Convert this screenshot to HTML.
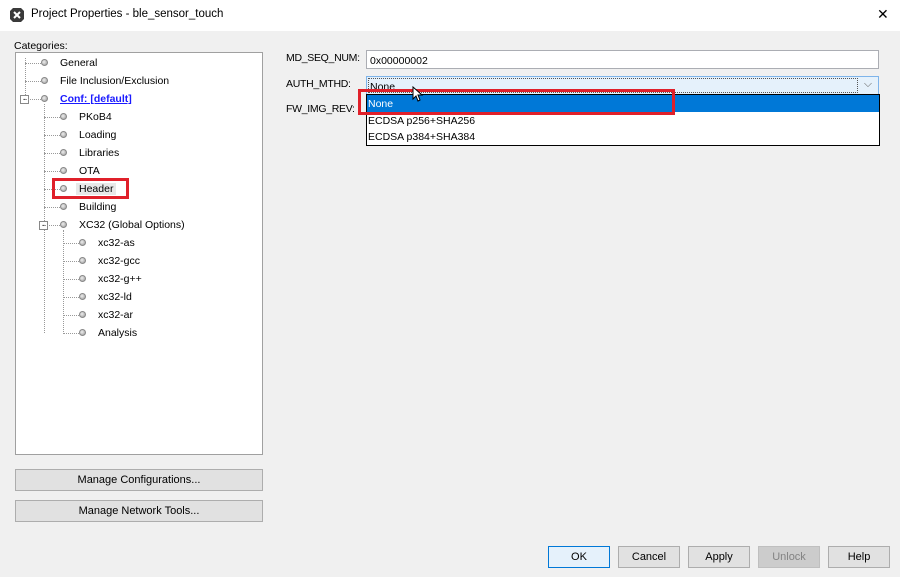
<!DOCTYPE html>
<html><head><style>
*{margin:0;padding:0;box-sizing:border-box}
body{width:900px;height:577px;background:#f0f0f0;font-family:"Liberation Sans",Arial,sans-serif;font-size:10.5px;color:#000;position:relative;overflow:hidden}
.a{position:absolute;white-space:nowrap}
.title{left:0;top:0;width:900px;height:31px;background:#fff}
.tree{left:15px;top:52px;width:248px;height:403px;background:#fff;border:1px solid #a0a0a0}
.dot{position:absolute;width:7px;height:7px;border-radius:50%;background:radial-gradient(circle at 40% 40%,#eee,#999);border:1px solid #888}
.btn{position:absolute;height:22px;background:#e1e1e1;border:1px solid #adadad;text-align:center;line-height:20px;font-size:11px}
.hl{border-left:1px dotted #999;position:absolute;width:0}
.hh{border-top:1px dotted #999;position:absolute;height:0}
</style></head><body>
<div class="a title"></div>
<svg class="a" style="left:9px;top:7px" width="16" height="16" viewBox="0 0 16 16"><path d="M4 1h8l3 3v8l-3 3H4l-3-3V4z" fill="#3a3a3a"/><path d="M5 5l6 6M11 5l-6 6" stroke="#fff" stroke-width="2"/></svg>
<div class="a" style="left:31px;top:8px;font-size:11.5px">Project Properties - ble_sensor_touch</div>
<div class="a" style="left:877px;top:6px;font-size:14px">✕</div>
<div class="a" style="left:14px;top:40px">Categories:</div>
<div class="a tree"></div>
<div class="hl" style="left:25px;top:58px;height:45px"></div>
<div class="hl" style="left:44px;top:104px;height:229px"></div>
<div class="hl" style="left:63px;top:230px;height:104px"></div>
<div class="a" style="left:20px;top:95px;width:9px;height:9px;border:1px solid #888;background:#fff;font-size:9px;line-height:6px;text-align:center">-</div>
<div class="a" style="left:39px;top:221px;width:9px;height:9px;border:1px solid #888;background:#fff;font-size:9px;line-height:6px;text-align:center">-</div>
<div id="t"></div>
<script>
var items=[[0,"General"],[0,"File Inclusion/Exclusion"],[0,"Conf: [default]"],[1,"PKoB4"],[1,"Loading"],[1,"Libraries"],[1,"OTA"],[1,"Header"],[1,"Building"],[1,"XC32 (Global Options)"],[2,"xc32-as"],[2,"xc32-gcc"],[2,"xc32-g++"],[2,"xc32-ld"],[2,"xc32-ar"],[2,"Analysis"]];
var h="";items.forEach(function(it,i){var y=63+18*i,l=it[0];var lx=[25,44,63][l],dx=[41,60,79][l],tx=[60,79,98][l];
h+='<div class="hh" style="left:'+lx+'px;top:'+y+'px;width:'+(dx-lx)+'px"></div>';
h+='<div class="dot" style="left:'+dx+'px;top:'+(y-4)+'px"></div>';
var st=i==2?'color:#1a1aff;font-weight:bold;text-decoration:underline;':'';
if(i==7)st='background:#e8e8e8;padding:0 3px;margin-left:-3px;';
h+='<div class="a" style="left:'+tx+'px;top:'+(y-6)+'px;'+st+'">'+it[1]+'</div>';});
document.getElementById('t').innerHTML=h;
</script>
<div class="a" style="left:52px;top:178px;width:77px;height:21px;border:3px solid #e0202a"></div>
<div class="btn" style="left:15px;top:469px;width:248px">Manage Configurations...</div>
<div class="btn" style="left:15px;top:500px;width:248px">Manage Network Tools...</div>
<div class="a" style="left:286px;top:52px;letter-spacing:-0.3px">MD_SEQ_NUM:</div>
<div class="a" style="left:366px;top:50px;width:513px;height:19px;background:#fff;border:1px solid #abadb3;padding:4px 0 0 3px">0x00000002</div>
<div class="a" style="left:286px;top:78px;letter-spacing:-0.3px">AUTH_MTHD:</div>
<div class="a" style="left:366px;top:76px;width:513px;height:19px;background:#e5f1fb;border:1px solid #7eb4ea"></div>
<div class="a" style="left:368px;top:78px;width:490px;height:15px;border:1px dotted #555;padding:2px 0 0 1px">None</div>
<div class="a" style="left:864px;top:78px;color:#666">⌵</div>
<div class="a" style="left:286px;top:103px;letter-spacing:-0.3px">FW_IMG_REV:</div>
<div class="a" style="left:366px;top:94px;width:514px;height:52px;background:#fff;border:1px solid #000"></div>
<div class="a" style="left:367px;top:95px;width:512px;height:17px;background:#0078d7;color:#fff;padding:3px 0 0 1px">None</div>
<div class="a" style="left:367px;top:115px;padding-left:1px">ECDSA p256+SHA256</div>
<div class="a" style="left:367px;top:131px;padding-left:1px">ECDSA p384+SHA384</div>
<div class="a" style="left:358px;top:89px;width:317px;height:26px;border:3px solid #e0202a"></div>
<svg class="a" style="left:412px;top:86px" width="12" height="16"><path d="M1 1v12l3-3 2 5 2-1-2-5h4z" fill="#fff" stroke="#000"/></svg>
<div class="btn" style="left:548px;top:546px;width:62px;border-color:#0078d7;background:#e5f1fb">OK</div>
<div class="btn" style="left:618px;top:546px;width:62px">Cancel</div>
<div class="btn" style="left:688px;top:546px;width:62px">Apply</div>
<div class="btn" style="left:758px;top:546px;width:62px;background:#cccccc;border-color:#bfbfbf;color:#838383">Unlock</div>
<div class="btn" style="left:828px;top:546px;width:62px">Help</div>
</body></html>
